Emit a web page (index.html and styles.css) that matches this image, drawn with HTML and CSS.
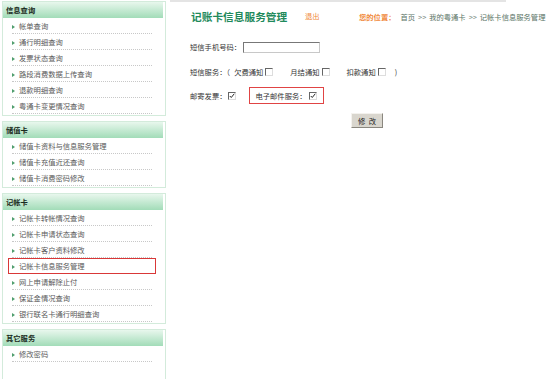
FILE: index.html
```html
<!DOCTYPE html>
<html lang="zh-CN">
<head>
    <meta charset="UTF-8">
    <title>记账卡信息服务管理</title>
    <link rel="stylesheet" href="styles.css">
</head>
<body>
    <div class="page">
        <aside class="sidebar">
            <div class="panel">
                <div class="panel-head">信息查询</div>
                <ul class="menu">
                    <li>帐单查询</li>
                    <li>通行明细查询</li>
                    <li>发票状态查询</li>
                    <li>路段消费数据上传查询</li>
                    <li>退款明细查询</li>
                    <li>粤通卡变更情况查询</li>
                </ul>
            </div>
            <div class="panel">
                <div class="panel-head">储值卡</div>
                <ul class="menu">
                    <li>储值卡资料与信息服务管理</li>
                    <li>储值卡充值近还查询</li>
                    <li>储值卡消费密码修改</li>
                </ul>
            </div>
            <div class="panel">
                <div class="panel-head">记帐卡</div>
                <ul class="menu">
                    <li>记帐卡转帐情况查询</li>
                    <li>记帐卡申请状态查询</li>
                    <li>记帐卡客户资料修改</li>
                    <li class="active">记帐卡信息服务管理</li>
                    <li>网上申请解除止付</li>
                    <li>保证金情况查询</li>
                    <li>银行联名卡通行明细查询</li>
                </ul>
            </div>
            <div class="panel panel-last">
                <div class="panel-head">其它服务</div>
                <ul class="menu">
                    <li>修改密码</li>
                </ul>
            </div>
        </aside>

        <main class="content">
            <div class="topline"></div>
            <div class="titlebar">
                <h1>记账卡信息服务管理</h1>
                <a class="logout">退出</a>
                <div class="crumb"><span class="here">您的位置：</span>首页<span class="sep">&gt;&gt;</span>我的粤通卡<span class="sep">&gt;&gt;</span>记帐卡信息服务管理</div>
            </div>

            <form class="form">
                <div class="row row-phone">
                    <span>短信手机号码：</span>
                    <input type="text" class="field">
                </div>
                <div class="row row-sms">
                    <span>短信服务：（</span>
                    <span class="opt first">欠费通知</span><span class="chk"></span>
                    <span class="opt">月结通知</span><span class="chk"></span>
                    <span class="opt">扣款通知</span><span class="chk"></span>
                    <span class="paren">)</span>
                </div>
                <div class="row row-mail">
                    <span>邮寄发票：</span>
                    <span class="chk"><svg viewBox="0 0 8 8" width="6" height="6"><polyline points="1,4 3,6 7,1" fill="none" stroke="#222" stroke-width="1.3"/></svg></span>
                    <span class="boxed">
                        <span>电子邮件服务：</span>
                        <span class="chk"><svg viewBox="0 0 8 8" width="6" height="6"><polyline points="1,4 3,6 7,1" fill="none" stroke="#222" stroke-width="1.3"/></svg></span>
                    </span>
                </div>
                <div class="row row-btn">
                    <button type="button" class="btn">修&nbsp;&nbsp;改</button>
                </div>
            </form>
        </main>
    </div>
</body>
</html>
```

FILE: styles.css
```css
body {
    margin: 0;
    background: #fff;
    font-family: "Noto Sans CJK SC", "Noto Sans", sans-serif;
    font-size: 7.3px;
    color: #444;
    overflow: hidden;
}
.page {
    display: flex;
    align-items: flex-start;
}
.sidebar {
    flex: none;
    width: 164px;
    margin: 1px 0 0 2px;
}
.panel {
    border: 1px solid #d3ebdb;
    margin-bottom: 5px;
    padding-bottom: 1px;
}
.panel-last {
    min-height: 60px;
}
.panel-head {
    height: 16px;
    line-height: 16px;
    padding-left: 3px;
    font-weight: bold;
    color: #1a2a20;
    background: linear-gradient(#e8f7ed, #a2dcb8);
    margin-right: 2px;
}
.menu {
    list-style: none;
    margin: 0;
    padding: 0;
}
.menu li {
    height: 15px;
    line-height: 16px;
    margin: 0 13px 0 9px;
    border-bottom: 1px dotted #c8c8c8;
    color: #5a5a5a;
}
.menu li::before {
    content: "";
    display: inline-block;
    width: 0;
    height: 0;
    border-left: 3px solid #4f9e6d;
    border-top: 2px solid transparent;
    border-bottom: 2px solid transparent;
    margin-right: 4px;
    vertical-align: 0;
}
.menu li.active {
    margin: 0 9px 0 5px;
    padding-left: 3px;
    height: 14px;
    line-height: 15px;
    border: 1px solid #d93838;
}
.content {
    flex: 1;
    min-width: 0;
    margin-left: 4px;
}
.topline {
    width: 336px;
    height: 2px;
    background: #e4e4e4;
}
.titlebar {
    display: flex;
    align-items: center;
    height: 28px;
    padding-left: 21px;
}
.titlebar h1 {
    flex: none;
    margin: 0;
    font-size: 10.7px;
    font-weight: bold;
    color: #1f8a5c;
    width: 114px;
}
.logout {
    flex: none;
    color: #f0883a;
    width: 54px;
}
.crumb {
    color: #5a7466;
    white-space: nowrap;
    margin-top: 1px;
}
.crumb .here {
    color: #f0883a;
    font-weight: bold;
    margin-right: 5px;
}
.crumb .sep {
    margin: 0 3px;
    color: #7a8a80;
}
.form {
    padding-left: 20px;
    color: #333;
}
.row {
    display: flex;
    align-items: center;
    white-space: nowrap;
}
.row-phone {
    margin-top: 10px;
    height: 14px;
}
.field {
    width: 77px;
    height: 11px;
    box-sizing: border-box;
    margin: 0 0 0 2px;
    padding: 0;
    border: 1px solid;
    border-color: #777 #c8c8c8 #c8c8c8 #777;
}
.row-sms {
    margin-top: 11px;
    height: 14px;
}
.opt {
    margin-left: 17px;
}
.opt.first {
    margin-left: 4px;
}
.chk {
    display: inline-flex;
    align-items: center;
    justify-content: center;
    width: 8px;
    height: 8px;
    box-sizing: border-box;
    margin-left: 2px;
    border: 1px solid;
    border-color: #666 #ddd #ddd #666;
    background: #fff;
}
.paren {
    margin-left: 9px;
}
.row-mail {
    margin-top: 8px;
    height: 17px;
}
.boxed {
    display: inline-flex;
    align-items: center;
    height: 17px;
    box-sizing: border-box;
    width: 75px;
    margin-left: 13px;
    padding-left: 5px;
    border: 1px solid #e04444;
}
.row-btn {
    margin-top: 9px;
}
.btn {
    margin-left: 161px;
    width: 32px;
    height: 15px;
    padding: 0;
    font-family: inherit;
    font-size: 7.3px;
    color: #222;
    background: #d9d6ce;
    border: 1px solid;
    border-color: #f4f2ee #8a877f #8a877f #f4f2ee;
}
```
